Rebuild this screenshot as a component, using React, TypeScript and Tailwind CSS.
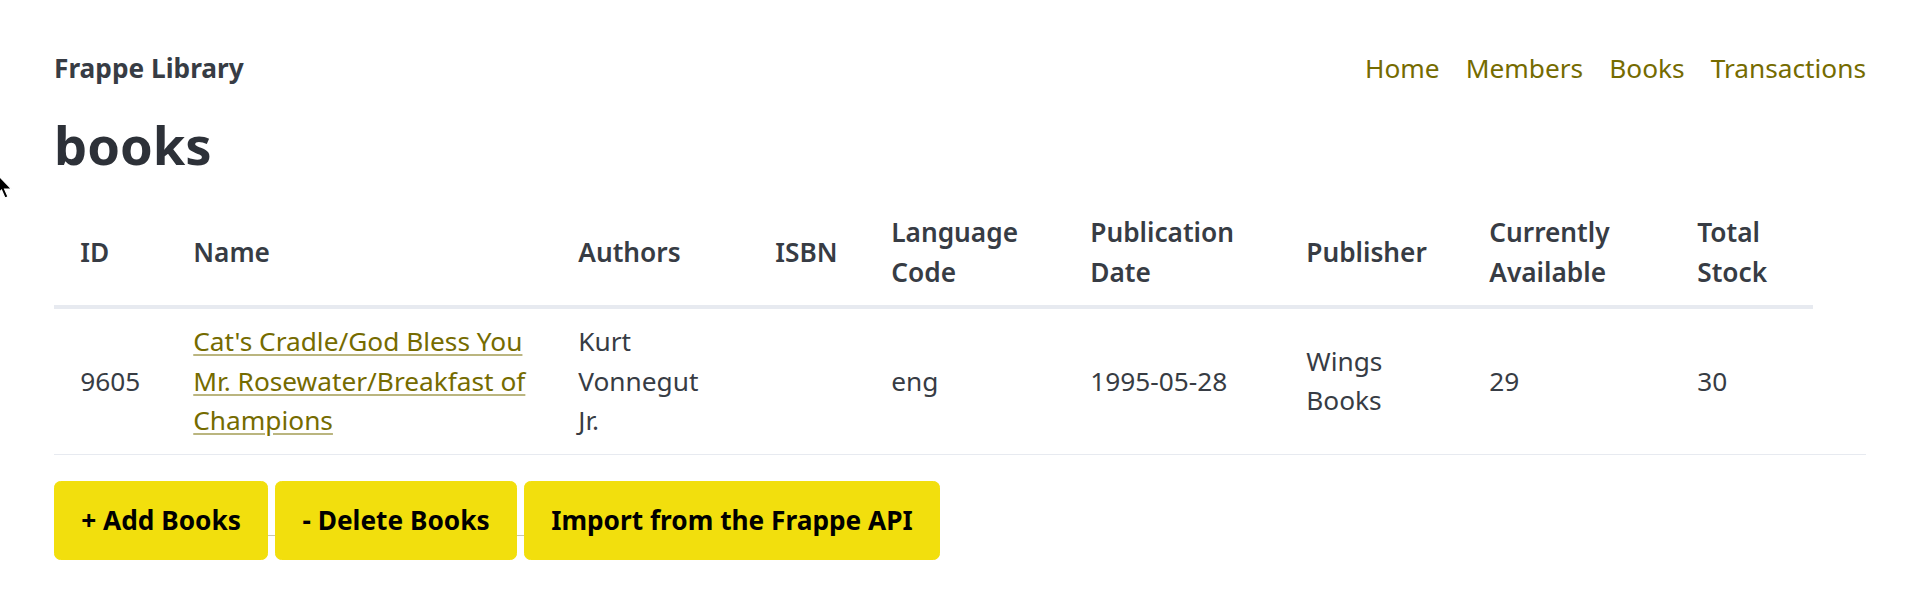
const COLUMNS = [
    { label: ["ID"], width: 113 },
    { label: ["Name"], width: 385 },
    { label: ["Authors"], width: 197 },
    { label: ["ISBN"], width: 116 },
    { label: ["Language", "Code"], width: 199 },
    { label: ["Publication", "Date"], width: 216 },
    { label: ["Publisher"], width: 183 },
    { label: ["Currently", "Available"], width: 208 },
    { label: ["Total", "Stock"], width: 142 },
];

const NAV_LINKS = ["Home", "Members", "Books", "Transactions"];

function Lines({ lines }: { lines: string[] }) {
    return (
        <>
            {lines.map((line, i) => (
                <span key={i} className="block whitespace-nowrap">{line}</span>
            ))}
        </>
    );
}

function YellowButton({ children }: { children: string }) {
    return (
        <button className="rounded-[6.5px] border-[1.5px] border-[#f2df0d] bg-[#f2df0d] px-[26.25px] py-[19px] text-[26.25px] leading-[39.375px] font-bold text-black">
            {children}
        </button>
    );
}

export default function App() {
    return (
        <div className="relative min-h-screen bg-white px-[54px] pt-[23px] font-['Noto_Sans',sans-serif] text-[26.25px] leading-[39.375px] text-[#373c44]">
            {/* stray mouse pointer in the screenshot */}
            <svg className="absolute left-[-5px] top-[172px]" width="20" height="30" viewBox="0 0 20 30">
                <path d="M1.5 1.5 L1.5 23 L6.5 18 L10 26 L13 24.8 L9.6 17 L16.5 17 Z" fill="#000" stroke="#fff" strokeWidth="1.2" />
            </svg>

            <nav className="flex items-center justify-between py-[26.25px]">
                <strong className="font-bold">Frappe Library</strong>
                <ul className="flex gap-[26px]">
                    {NAV_LINKS.map((link) => (
                        <li key={link}>
                            <a href="#" className="text-[#756b00]">{link}</a>
                        </li>
                    ))}
                </ul>
            </nav>

            <h1 className="mb-[26.25px] text-[52.5px] leading-[59px] font-bold text-[#2d3138]">books</h1>

            <table className="mb-[26px] w-full table-fixed border-collapse">
                <colgroup>
                    {COLUMNS.map((col) => (
                        <col key={col.label.join(" ")} style={{ width: col.width }} />
                    ))}
                    <col />
                </colgroup>
                <thead>
                    <tr>
                        {COLUMNS.map((col) => (
                            <th
                                key={col.label.join(" ")}
                                className="border-b-4 border-[#e7eaf0] px-[26.25px] py-[13.125px] text-left align-middle font-semibold"
                            >
                                <Lines lines={col.label} />
                            </th>
                        ))}
                    </tr>
                </thead>
                <tbody>
                    <tr className="align-middle">
                        <td className="border-b-[1.5px] border-[#e7eaf0] px-[26.25px] py-[13.125px]">9605</td>
                        <td className="border-b-[1.5px] border-[#e7eaf0] px-[26.25px] py-[13.125px]">
                            <a href="#" className="text-[#756b00] underline decoration-[rgba(117,107,0,0.5)] underline-offset-[3px]">
                                <Lines lines={["Cat's Cradle/God Bless You", "Mr. Rosewater/Breakfast of", "Champions"]} />
                            </a>
                        </td>
                        <td className="border-b-[1.5px] border-[#e7eaf0] px-[26.25px] py-[13.125px]">
                            <Lines lines={["Kurt", "Vonnegut", "Jr."]} />
                        </td>
                        <td className="border-b-[1.5px] border-[#e7eaf0] px-[26.25px] py-[13.125px]"></td>
                        <td className="border-b-[1.5px] border-[#e7eaf0] px-[26.25px] py-[13.125px]">eng</td>
                        <td className="border-b-[1.5px] border-[#e7eaf0] px-[26.25px] py-[13.125px]">1995-05-28</td>
                        <td className="border-b-[1.5px] border-[#e7eaf0] px-[26.25px] py-[13.125px]">
                            <Lines lines={["Wings", "Books"]} />
                        </td>
                        <td className="border-b-[1.5px] border-[#e7eaf0] px-[26.25px] py-[13.125px]">29</td>
                        <td className="border-b-[1.5px] border-[#e7eaf0] px-[26.25px] py-[13.125px]">30</td>
                        <td className="border-b-[1.5px] border-[#e7eaf0]"></td>
                    </tr>
                </tbody>
            </table>

            <div className="flex items-start">
                <YellowButton>+ Add Books</YellowButton>
                <span className="mt-[54px] h-[1.5px] w-[7px] bg-[#c9c7b4]" />
                <YellowButton>- Delete Books</YellowButton>
                <span className="mt-[54px] h-[1.5px] w-[7px] bg-[#c9c7b4]" />
                <YellowButton>Import from the Frappe API</YellowButton>
            </div>
        </div>
    );
}
